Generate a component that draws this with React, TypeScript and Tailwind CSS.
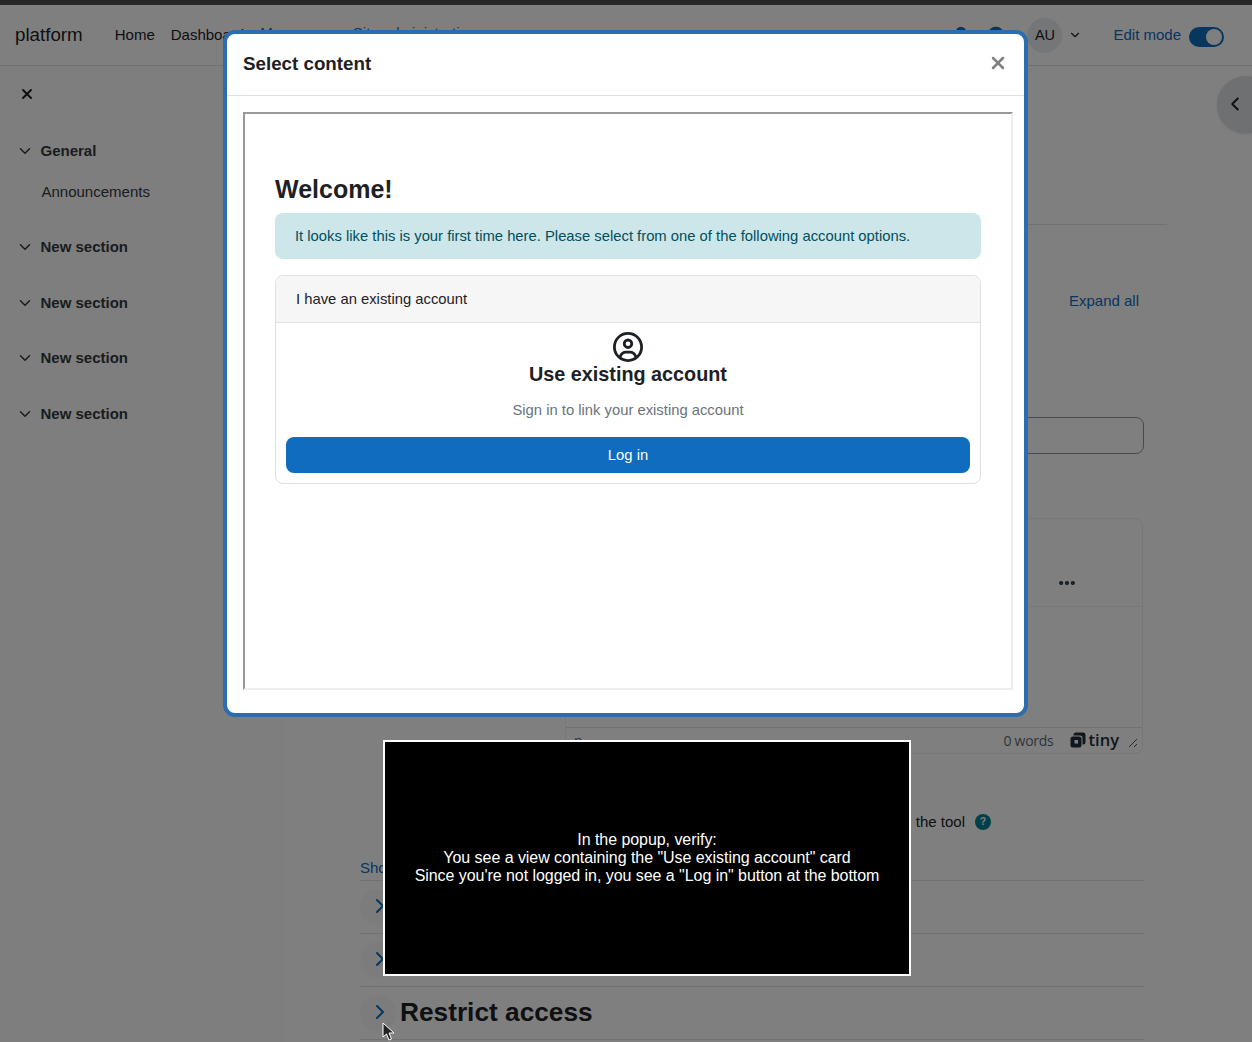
import { ChevronDown, ChevronLeft, ChevronRight, X, Bell, MessageCircle, Ellipsis } from 'lucide-react';
import { FaRegCircleUser } from 'react-icons/fa6';

const sections = ['New section', 'New section', 'New section', 'New section'];

function TinyLogo() {
    return (
        <svg width="16" height="16" viewBox="0 0 16 16" className="shrink-0" fill="#222f3e">
            <path d="M6 0.5 H13 Q15.5 0.5 15.5 3 V10 Q15.5 12.5 13 12.5 H12.5 V6 Q12.5 3.5 10 3.5 H3.5 V3 Q3.5 0.5 6 0.5 Z" />
            <path d="M3 4.5 H9 Q11.5 4.5 11.5 7 V13 Q11.5 15.5 9 15.5 H3 Q0.5 15.5 0.5 13 V7 Q0.5 4.5 3 4.5 Z M4.5 8 V11.5 H8 V8 Z" fillRule="evenodd" />
        </svg>
    );
}

function Collapsed({ label }: { label?: string }) {
    return (
        <div className="flex h-[53px] items-center border-b border-[#dee2e6] pb-[1px]">
            <div className="flex h-9 w-9 items-center justify-center rounded-full bg-[#f8f9fa] text-[#0f6cbf]">
                <ChevronRight size={24} strokeWidth={2} className="-mt-[2px] ml-[3px]" />
            </div>
            {label && <h3 className="ml-1 text-[26.25px] leading-none font-bold text-[#1d2125]">{label}</h3>}
        </div>
    );
}

export default function App() {
    return (
        <div className="relative h-[1042px] overflow-hidden bg-white font-['Liberation_Sans',Arial,sans-serif] text-[15px] text-[#1d2125]">
            {/* Top strip */}
            <div className="h-[5px] bg-[#282828]" />

            {/* Navbar */}
            <header className="flex h-[61px] items-center border-b border-[#dee2e6] pl-[15px]">
                <span className="text-[18.75px]">platform</span>
                <nav className="ml-8 flex gap-4">
                    <a>Home</a>
                    <a>Dashboard</a>
                    <a className="-mt-[2px] text-[#0f6cbf]">My courses</a>
                    <a className="-mt-[2px] text-[#0f6cbf]">Site administration</a>
                </nav>
                <div className="ml-auto flex items-center pr-7">
                    <Bell size={18} fill="#0f6cbf" className="mr-[17px] text-[#0f6cbf]" />
                    <MessageCircle size={18} fill="#0f6cbf" className="mr-[22px] text-[#0f6cbf]" />
                    <div className="mt-[1px] flex h-[35px] w-[35px] items-center justify-center rounded-full bg-[#e9ecef] text-[14.5px]">AU</div>
                    <ChevronDown size={14} strokeWidth={2} className="ml-[6px]" />
                    <span className="ml-[31px] text-[#0f6cbf]">Edit mode</span>
                    <div className="mt-[3px] ml-2 flex h-5 w-[35px] items-center justify-end rounded-full bg-[#0f6cbf] pr-[2px]">
                        <div className="h-4 w-4 rounded-full bg-white" />
                    </div>
                </div>
            </header>

            <div className="flex">
                {/* Course index drawer */}
                <aside className="h-[976px] w-[285px] shrink-0 bg-[#fcfcfc] pl-[16px]">
                    <X size={16} strokeWidth={3} className="mt-[20px] ml-[3px]" />
                    <div className="mt-[38px] flex items-center gap-[6.5px] font-bold text-[#343a40]">
                        <ChevronDown size={18} strokeWidth={2} />
                        General
                    </div>
                    <div className="mt-[18px] ml-[25.5px] text-[#343a40]">Announcements</div>
                    {sections.map((s, i) => (
                        <div key={i} className="mt-[33px] flex items-center gap-[6.5px] font-bold text-[#343a40]">
                            <ChevronDown size={18} strokeWidth={2} />
                            {s}
                        </div>
                    ))}
                </aside>

                {/* Main form behind the dialog */}
                <main className="relative min-w-0 flex-1">
                    <div className="mr-[85px] h-[159px] border-b border-[#dee2e6]" />
                    <div className="mt-[66px] mr-[113px] text-right leading-5 text-[#0f6cbf]">Expand all</div>

                    <div className="mt-[106px] mr-[108px] ml-[280px] h-[37px] rounded-lg border border-[#8f959e]" />

                    <div className="mt-[64px] mr-[109px] ml-[280px] h-[236px] rounded-lg border border-[#eee] bg-white">
                        <div className="flex h-[88px] items-end justify-end border-b border-[#f1f1f1] pr-[65px] pb-[13px]">
                            <Ellipsis size={20} strokeWidth={3} className="text-[#222f3e]" />
                        </div>
                        <div className="h-[120px]" />
                        <div className="flex h-[26px] items-center justify-between border-t border-[#e3e3e3] pr-[4px] pb-[1px] pl-2 font-['Open_Sans',sans-serif] text-[14px] tracking-[-0.25px] text-[#222f3e]/75">
                            <span>p</span>
                            <div className="flex items-center">
                                <span>0 words</span>
                                <span className="ml-[16px]"><TinyLogo /></span>
                                <span className="ml-[3px] text-[16.5px] leading-none font-semibold tracking-normal text-[#222f3e]">tiny</span>
                                <svg width="10" height="10" viewBox="0 0 10 10" className="mt-[6px] ml-[9px]" stroke="#555" fill="none">
                                    <path d="M1 9 L9 1 M6 9 L9 6" />
                                </svg>
                            </div>
                        </div>
                    </div>

                    <div className="mt-[58px] mr-[261px] flex items-center justify-end leading-5">
                        <span>the tool</span>
                        <span className="ml-[10px] flex h-4 w-4 items-center justify-center rounded-full bg-[#008196] text-[10px] font-bold text-white">?</span>
                    </div>

                    <div className="mt-[26px] mr-[108px] ml-[75px]">
                        <div className="border-b border-[#dee2e6] pb-[2px] leading-5 text-[#0f6cbf]">Show more</div>
                        <Collapsed label="Availability" />
                        <Collapsed label="Completion" />
                        <Collapsed label="Restrict access" />
                    </div>

                    {/* Right drawer toggle */}
                    <div className="absolute top-[10px] -right-[22px] flex h-[57px] w-[57px] items-center rounded-full bg-[#dfe1e4] pl-[7px] shadow-sm">
                        <ChevronLeft size={22} strokeWidth={2.2} className="-mt-[2px]" />
                    </div>
                </main>
            </div>

            {/* Backdrop */}
            <div className="absolute inset-x-0 top-[5px] bottom-0 bg-black/50" />

            {/* Dialog */}
            <div className="absolute top-[30px] left-[223px] flex h-[687px] w-[805px] flex-col rounded-[12px] border-4 border-[#2a6db0] bg-white">
                <div className="flex h-[62px] shrink-0 items-center justify-between border-b border-[#dee2e6] pr-[16px] pl-[16px]">
                    <h5 className="text-[18.75px] font-bold">Select content</h5>
                    <X size={20} strokeWidth={3} className="-mt-[3px] text-[#808080]" />
                </div>
                <div className="mt-[16px] ml-[16px] h-[578px] w-[770px] border-2 border-t-[#999] border-r-[#eee] border-b-[#eee] border-l-[#999] px-[30px] pt-[60px] text-[14.8px]">
                    <h2 className="text-[25px] leading-[30px] font-bold">Welcome!</h2>
                    <div className="mt-[9px] flex h-[46px] items-center rounded-lg bg-[#cce6ea] px-5 text-[#004f5c]">
                        It looks like this is your first time here. Please select from one of the following account options.
                    </div>
                    <div className="mt-4 h-[209px] rounded-lg border border-[#dee2e6]">
                        <div className="flex h-[47px] items-center rounded-t-lg border-b border-[#dee2e6] bg-[#f6f6f6] px-5">
                            I have an existing account
                        </div>
                        <div className="flex flex-col items-center px-[10px] pt-[9px]">
                            <FaRegCircleUser size={30} />
                            <h5 className="text-[19.8px] leading-6 font-bold">Use existing account</h5>
                            <p className="mt-[13px] leading-[22px] text-[#6a737b]">Sign in to link your existing account</p>
                            <button className="mt-[16px] h-9 w-full rounded-lg bg-[#0f6cbf] text-white">Log in</button>
                        </div>
                    </div>
                </div>
            </div>

            {/* Instruction box */}
            <div className="absolute top-[740px] left-[383px] flex h-[236px] w-[528px] items-center justify-center border-2 border-white bg-black text-center text-[16px] leading-[18px] tracking-[-0.05px] text-white">
                <p>
                    In the popup, verify:<br />
                    You see a view containing the "Use existing account" card<br />
                    Since you're not logged in, you see a "Log in" button at the bottom
                </p>
            </div>

            {/* Mouse cursor */}
            <svg width="13" height="20" viewBox="0 0 13 20" className="absolute top-[1022px] left-[382px]">
                <path d="M1 1 L1 15 L4.5 12 L7 18 L9.5 17 L7 11 L12 11 Z" fill="#222" stroke="#fff" strokeWidth="1" />
            </svg>
        </div>
    );
}
